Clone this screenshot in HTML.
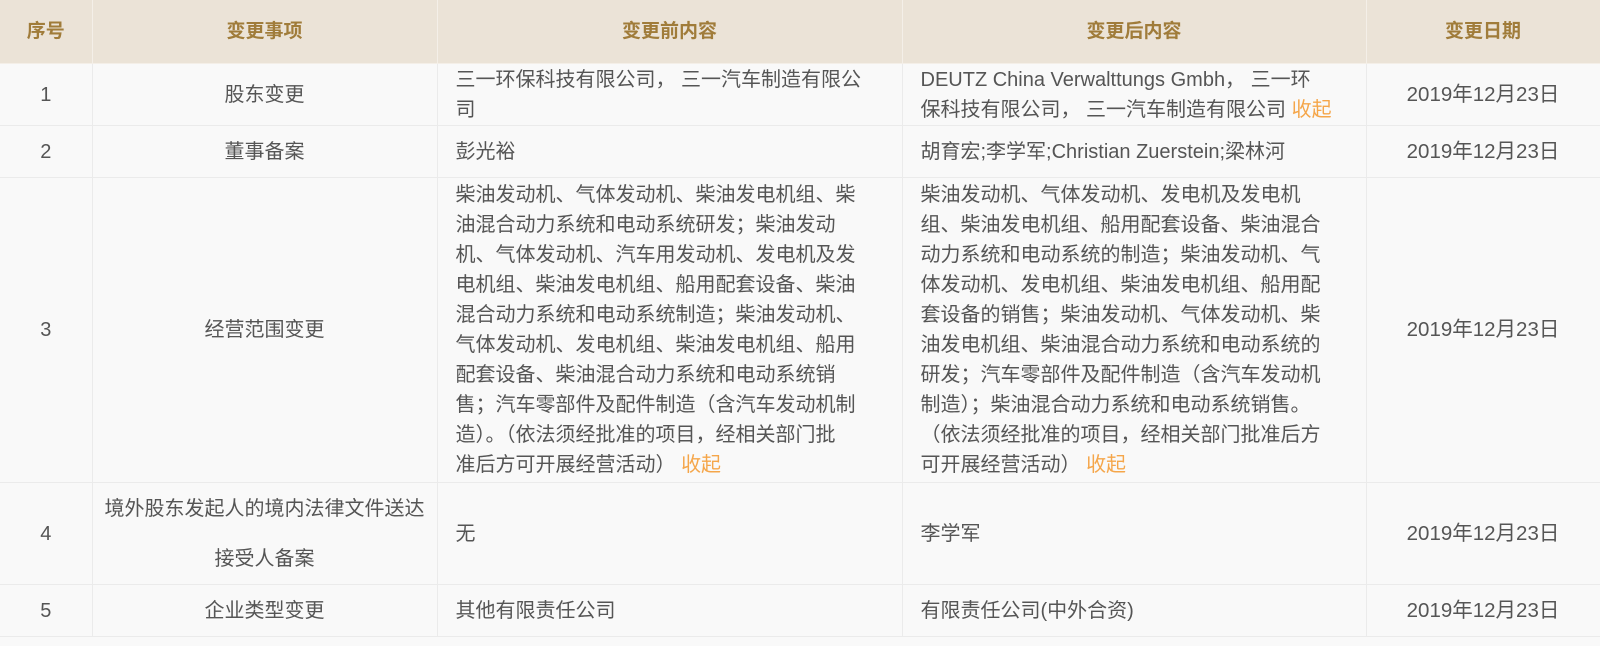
<!DOCTYPE html>
<html><head><meta charset="utf-8"><style>
body{margin:0;background:#f9f9f9;width:1600px;height:646px;overflow:hidden;}
table{border-collapse:collapse;table-layout:fixed;width:1600px;font-family:"Liberation Sans","Noto Sans CJK SC",sans-serif;font-size:20px;color:#555;}
td,th{border:1px solid #ebebeb;background:#f9f9f9;line-height:30px;padding:0 0 0 18px;vertical-align:middle;white-space:nowrap;overflow:hidden}
tr>*:first-child{border-left:none}
th{background:#ebe3d7;color:#a07c3a;font-weight:bold;height:63px;border-color:#f4efe8;border-top:none;font-size:19px;padding:0}
.c{text-align:center;padding:0}
.d{font-size:20.5px}
.o{color:#f5a64a}
</style></head><body>
<table>
<colgroup><col style="width:92px"><col style="width:345px"><col style="width:465px"><col style="width:464px"><col style="width:234px"></colgroup>
<tr><th>序号</th><th>变更事项</th><th>变更前内容</th><th>变更后内容</th><th>变更日期</th></tr>
<tr style="height:62px"><td class="c">1</td><td class="c">股东变更</td><td>三一环保科技有限公司， 三一汽车制造有限公<br>司</td><td>DEUTZ China Verwalttungs Gmbh， 三一环<br>保科技有限公司， 三一汽车制造有限公司 <span class="o">收起</span></td><td class="c d">2019年12月23日</td></tr>
<tr style="height:52px"><td class="c">2</td><td class="c">董事备案</td><td>彭光裕</td><td>胡育宏;李学军;Christian Zuerstein;梁林河</td><td class="c d">2019年12月23日</td></tr>
<tr style="height:305px"><td class="c">3</td><td class="c">经营范围变更</td><td>柴油发动机、气体发动机、柴油发电机组、柴<br>油混合动力系统和电动系统研发；柴油发动<br>机、气体发动机、汽车用发动机、发电机及发<br>电机组、柴油发电机组、船用配套设备、柴油<br>混合动力系统和电动系统制造；柴油发动机、<br>气体发动机、发电机组、柴油发电机组、船用<br>配套设备、柴油混合动力系统和电动系统销<br>售；汽车零部件及配件制造（含汽车发动机制<br>造）。（依法须经批准的项目，经相关部门批<br>准后方可开展经营活动） <span class="o">收起</span></td><td>柴油发动机、气体发动机、发电机及发电机<br>组、柴油发电机组、船用配套设备、柴油混合<br>动力系统和电动系统的制造；柴油发动机、气<br>体发动机、发电机组、柴油发电机组、船用配<br>套设备的销售；柴油发动机、气体发动机、柴<br>油发电机组、柴油混合动力系统和电动系统的<br>研发；汽车零部件及配件制造（含汽车发动机<br>制造）；柴油混合动力系统和电动系统销售。<br>（依法须经批准的项目，经相关部门批准后方<br>可开展经营活动） <span class="o">收起</span></td><td class="c d">2019年12月23日</td></tr>
<tr style="height:102px"><td class="c">4</td><td class="c" style="line-height:50px">境外股东发起人的境内法律文件送达<br>接受人备案</td><td>无</td><td>李学军</td><td class="c d">2019年12月23日</td></tr>
<tr style="height:52px"><td class="c">5</td><td class="c">企业类型变更</td><td>其他有限责任公司</td><td>有限责任公司(中外合资)</td><td class="c d">2019年12月23日</td></tr>
</table>
</body></html>
